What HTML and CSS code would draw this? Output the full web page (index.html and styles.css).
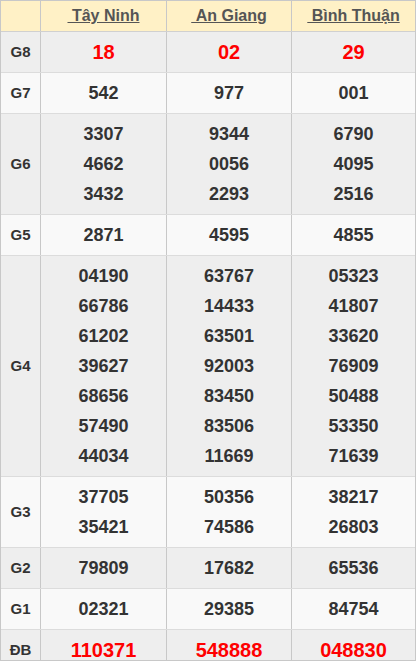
FILE: index.html
```html
<!DOCTYPE html>
<html>
<head>
<meta charset="utf-8">
<link rel="stylesheet" href="styles.css">
</head>
<body>
<div class="board">
  <div class="row head">
    <div class="cell"></div>
    <div class="cell"><a class="prov">&nbsp;Tây Ninh</a></div>
    <div class="cell"><a class="prov">&nbsp;An Giang</a></div>
    <div class="cell"><a class="prov">&nbsp;Bình Thuận</a></div>
  </div>
  <div class="row dark">
    <div class="cell lbl">G8</div>
    <div class="cell num red">18</div>
    <div class="cell num red">02</div>
    <div class="cell num red">29</div>
  </div>
  <div class="row light">
    <div class="cell lbl">G7</div>
    <div class="cell num">542</div>
    <div class="cell num">977</div>
    <div class="cell num">001</div>
  </div>
  <div class="row dark">
    <div class="cell lbl">G6</div>
    <div class="cell num"><div>3307</div><div>4662</div><div>3432</div></div>
    <div class="cell num"><div>9344</div><div>0056</div><div>2293</div></div>
    <div class="cell num"><div>6790</div><div>4095</div><div>2516</div></div>
  </div>
  <div class="row light">
    <div class="cell lbl">G5</div>
    <div class="cell num">2871</div>
    <div class="cell num">4595</div>
    <div class="cell num">4855</div>
  </div>
  <div class="row dark">
    <div class="cell lbl">G4</div>
    <div class="cell num"><div>04190</div><div>66786</div><div>61202</div><div>39627</div><div>68656</div><div>57490</div><div>44034</div></div>
    <div class="cell num"><div>63767</div><div>14433</div><div>63501</div><div>92003</div><div>83450</div><div>83506</div><div>11669</div></div>
    <div class="cell num"><div>05323</div><div>41807</div><div>33620</div><div>76909</div><div>50488</div><div>53350</div><div>71639</div></div>
  </div>
  <div class="row light">
    <div class="cell lbl">G3</div>
    <div class="cell num"><div>37705</div><div>35421</div></div>
    <div class="cell num"><div>50356</div><div>74586</div></div>
    <div class="cell num"><div>38217</div><div>26803</div></div>
  </div>
  <div class="row dark">
    <div class="cell lbl">G2</div>
    <div class="cell num">79809</div>
    <div class="cell num">17682</div>
    <div class="cell num">65536</div>
  </div>
  <div class="row light">
    <div class="cell lbl">G1</div>
    <div class="cell num">02321</div>
    <div class="cell num">29385</div>
    <div class="cell num">84754</div>
  </div>
  <div class="row dark">
    <div class="cell lbl">ĐB</div>
    <div class="cell num red">110371</div>
    <div class="cell num red">548888</div>
    <div class="cell num red">048830</div>
  </div>
</div>
</body>
</html>
```

FILE: styles.css
```css
* { box-sizing: border-box; }
html, body {
  margin: 0;
  padding: 0;
  background: #fff;
}
body {
  font-family: "Liberation Sans", Arial, sans-serif;
  color: #333;
}
.board {
  width: 416px;
  height: 661px;
  border: 1px solid #c8c8c8;
  overflow: hidden;
  display: flex;
  flex-direction: column;
}
.row {
  display: grid;
  grid-template-columns: 40px 126px 125px 123px;
  border-bottom: 1px solid #dcdcdc;
  flex: none;
}
.row.dark { background: #eeeeee; }
.row.light { background: #f9f9f9; }
.row.head {
  background: #fff1c6;
  border-bottom-color: #d0d0d0;
}
.cell {
  border-right: 1px solid #c8c8c8;
  text-align: center;
  padding: 5px 0;
  line-height: 30px;
}
.cell:last-child { border-right: none; }
.head .cell {
  padding: 0;
  line-height: 30px;
}
.prov {
  font-size: 16px;
  font-weight: bold;
  color: #555555;
  text-decoration: underline;
}
.lbl {
  font-size: 15px;
  font-weight: bold;
  color: #333;
  display: flex;
  align-items: center;
  justify-content: center;
}
.num {
  font-size: 18px;
  font-weight: bold;
  color: #333;
}
.num.red {
  color: #ff0000;
  font-size: 20px;
}
```
